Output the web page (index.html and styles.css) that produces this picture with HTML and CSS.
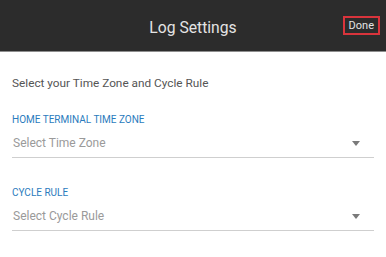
FILE: index.html
```html
<!DOCTYPE html>
<html>
<head>
<meta charset="utf-8">
<link rel="stylesheet" href="styles.css">
</head>
<body>
<header class="topbar">
  <span class="spacer"></span>
  <h1 class="title">Log Settings</h1>
  <button class="done">Done</button>
</header>
<main class="content">
  <p class="intro">Select your Time Zone and Cycle Rule</p>
  <div class="group">
    <div class="label">HOME TERMINAL TIME ZONE</div>
    <div class="select">
      <span class="placeholder">Select Time Zone</span>
      <span class="caret"></span>
    </div>
  </div>
  <div class="group second">
    <div class="label">CYCLE RULE</div>
    <div class="select">
      <span class="placeholder">Select Cycle Rule</span>
      <span class="caret"></span>
    </div>
  </div>
</main>
</body>
</html>
```
FILE: styles.css
```css
* { box-sizing: border-box; }
html, body { margin: 0; padding: 0; background: #fff; }
body { font-family: Roboto, "Noto Sans", sans-serif; width: 386px; height: 257px; overflow: hidden; }

.topbar {
  height: 52px;
  background: #2c2c2c;
  border-bottom: 1px solid #8e8e8e;
  display: grid;
  grid-template-columns: 1fr auto 1fr;
  align-items: center;
  padding-top: 5px;
}
.title {
  margin: 0;
  font-weight: 400;
  font-size: 15.7px;
  line-height: 20px;
  color: #e4e4e4;
}
.done {
  justify-self: end;
  margin-right: 6px;
  margin-top: -6px;
  font-family: inherit;
  font-size: 11px;
  line-height: 15px;
  color: #e4e4e4;
  background: transparent;
  border: 2px solid #d9343c;
  padding: 0 4px;
  height: 19px;
}

.content { padding: 0 12px; }
.intro {
  margin: 23px 0 0;
  font-size: 11.8px;
  line-height: 16px;
  color: #555;
}
.group { margin-top: 22px; }
.group.second { margin-top: 28px; }
.label {
  font-size: 10px;
  line-height: 13px;
  color: #2b7bbd;
}
.select {
  margin-top: 9px;
  display: flex;
  align-items: center;
  justify-content: space-between;
  padding: 0 14px 6px 1px;
  border-bottom: 1px solid #cfcfcf;
}
.placeholder {
  font-size: 12px;
  line-height: 16px;
  color: #9a9a9a;
}
.caret {
  width: 0;
  height: 0;
  border-left: 4.5px solid transparent;
  border-right: 4.5px solid transparent;
  border-top: 5px solid #7a7a7a;
}
```
